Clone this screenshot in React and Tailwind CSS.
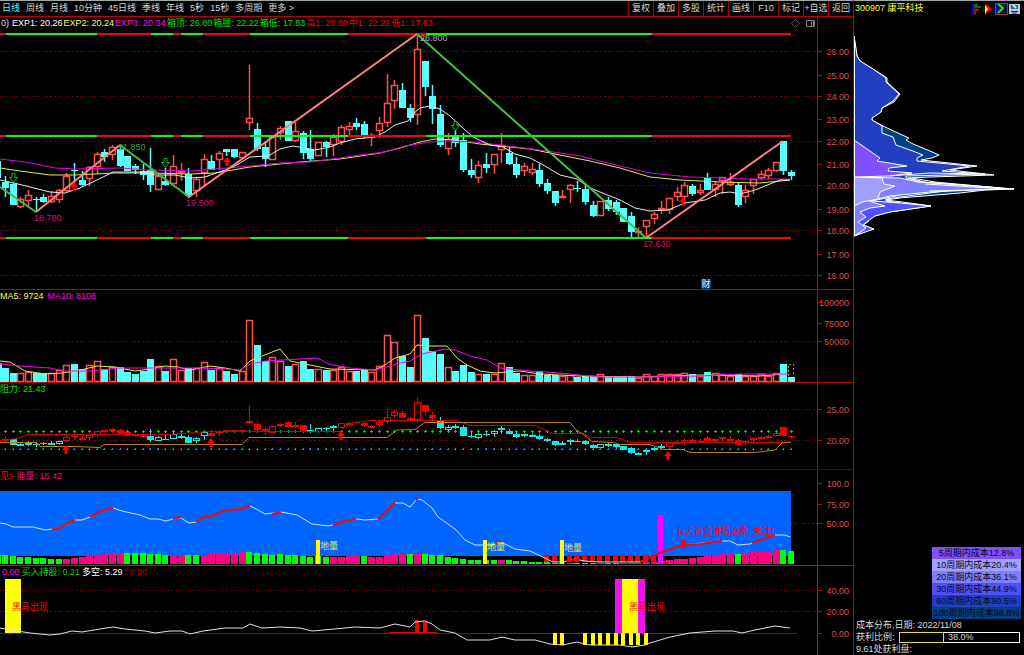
import { Diamond } from "lucide-react";

const periods = ["日线", "周线", "月线", "10分钟", "45日线", "季线", "年线", "5秒", "15秒", "多周期", "更多 >"];
const tools = ["复权", "叠加", "多股", "统计", "画线", "F10", "标记", "+自选", "返回"];

const UP = "#ff5050";
const DOWN = "#54ffff";
const PITCH = 7.63;
const barX = (i) => Math.round(5.2 + PITCH * i);

// kind, high, body top, body bottom, low, volume top
const candles = [
  ["d", 176, 182, 188, 197, 368], ["d", 183, 184, 205, 205, 373], ["u", 197, 199, 207, 208, 373], ["u", 190, 195, 201, 206, 372],
  ["d", 197, 199, 200, 211, 373], ["d", 194, 197, 202, 203, 373], ["u", 191, 196, 202, 203, 373], ["u", 189, 190, 200, 203, 370],
  ["u", 173, 176, 191, 192, 365], ["d", 163, 170, 171, 185, 364], ["d", 171, 180, 185, 187, 369], ["u", 166, 167, 179, 186, 365],
  ["u", 152, 154, 167, 174, 361], ["d", 149, 152, 157, 162, 369], ["u", 145, 147, 155, 160, 367], ["d", 146, 149, 166, 167, 367],
  ["d", 156, 156, 171, 171, 372], ["d", 164, 166, 170, 174, 374], ["d", 164, 171, 175, 180, 371], ["d", 148, 170, 185, 192, 359],
  ["u", 173, 176, 190, 190, 366], ["d", 168, 181, 185, 186, 371], ["u", 155, 166, 184, 184, 359], ["u", 163, 171, 173, 181, 370],
  ["d", 168, 174, 196, 198, 368], ["u", 177, 179, 191, 197, 368], ["u", 154, 159, 173, 185, 362], ["d", 155, 161, 170, 170, 370],
  ["u", 151, 153, 160, 170, 368], ["d", 149, 149, 152, 156, 371], ["d", 149, 149, 157, 158, 374], ["u", 152, 152, 158, 159, 371],
  ["u", 65, 118, 123, 130, 320], ["d", 123, 129, 149, 151, 345], ["d", 143, 147, 159, 167, 361], ["u", 137, 137, 160, 160, 357],
  ["u", 126, 128, 133, 140, 361], ["d", 121, 121, 141, 141, 366], ["u", 122, 131, 141, 142, 364], ["d", 131, 133, 153, 159, 361],
  ["d", 130, 149, 159, 161, 369], ["u", 142, 142, 156, 156, 369], ["d", 141, 142, 147, 157, 370], ["u", 134, 137, 145, 156, 370],
  ["u", 125, 127, 142, 145, 367], ["u", 122, 126, 130, 135, 371], ["d", 118, 123, 127, 130, 371], ["d", 121, 124, 137, 138, 369],
  ["u", 133, 135, 137, 146, 372], ["u", 117, 123, 131, 138, 366], ["u", 74, 103, 123, 127, 335], ["u", 80, 85, 101, 109, 342],
  ["d", 83, 90, 108, 108, 356], ["d", 104, 108, 118, 122, 367], ["u", 36, 49, 115, 125, 315], ["d", 61, 61, 87, 96, 338],
  ["d", 85, 96, 109, 124, 351], ["d", 105, 114, 145, 147, 354], ["u", 133, 139, 149, 155, 367], ["d", 130, 137, 143, 147, 371],
  ["d", 133, 140, 170, 172, 365], ["d", 159, 170, 175, 178, 372], ["u", 161, 165, 178, 183, 374], ["d", 153, 164, 168, 173, 374],
  ["u", 154, 154, 165, 174, 374], ["u", 133, 145, 150, 163, 363], ["d", 147, 153, 164, 165, 367], ["d", 157, 164, 175, 178, 373],
  ["u", 163, 166, 171, 176, 375], ["u", 163, 169, 173, 175, 375], ["d", 164, 170, 184, 187, 371], ["d", 179, 183, 191, 194, 375],
  ["d", 191, 191, 203, 206, 375], ["u", 190, 196, 197, 198, 376], ["u", 184, 185, 190, 203, 375], ["d", 181, 188, 189, 192, 377],
  ["d", 185, 189, 202, 205, 376], ["d", 201, 205, 216, 217, 376], ["u", 201, 201, 216, 216, 374], ["d", 197, 200, 209, 211, 376],
  ["d", 200, 202, 212, 215, 376], ["d", 208, 208, 222, 222, 376], ["d", 212, 216, 232, 237, 376], ["u", 227, 231, 233, 238, 378],
  ["u", 220, 220, 227, 238, 374], ["u", 212, 214, 219, 224, 376], ["u", 201, 208, 210, 214, 374], ["u", 198, 198, 210, 214, 374],
  ["u", 187, 192, 197, 201, 374], ["u", 182, 185, 197, 205, 373], ["d", 184, 186, 194, 196, 374], ["u", 184, 190, 193, 195, 376],
  ["d", 173, 178, 190, 190, 372], ["u", 181, 184, 190, 197, 373], ["u", 177, 177, 181, 194, 374], ["u", 173, 182, 185, 186, 376],
  ["d", 182, 185, 205, 207, 374], ["u", 185, 190, 197, 203, 376], ["u", 179, 179, 186, 194, 376], ["u", 171, 174, 178, 180, 374],
  ["u", 168, 170, 176, 179, 376], ["u", 162, 162, 171, 172, 373], ["d", 141, 141, 171, 175, 364], ["d", 170, 172, 176, 180, 377],
];

// top and bottom box lines change colour at these points
const boxSegments = [
  [0, 6, "#f00"], [6, 97, "#0f0"], [97, 151, "#f00"], [151, 173, "#0f0"], [173, 181, "#f00"], [181, 203, "#0f0"],
  [203, 250, "#f00"], [250, 348, "#0f0"], [348, 426, "#f00"], [426, 652, "#0f0"], [652, 791, "#f00"],
];

const exp1 = "0,180 14,183 30,187 50,192 65,193 80,188 95,181 113,172 140,172 155,175 175,175 190,178 205,177 225,170 235,166 250,157 268,156 280,149 293,146 305,148 315,150 330,147 340,143 355,139 375,137 385,132 395,125 408,121 413,114 420,108 430,106 440,109 450,116 465,130 475,138 490,145 503,147 515,154 530,158 545,166 560,175 577,179 590,188 605,194 620,200 635,208 650,211 668,210 685,203 705,200 720,193 730,192 740,194 755,190 780,180 790,180";
const exp2 = "0,168 20,171 50,175 75,175 115,173 150,173 190,174 215,173 250,167 280,164 300,162 340,159 380,153 400,148 420,142 435,139 455,140 480,144 500,146 530,149 560,155 590,161 620,168 650,177 680,180 720,182 760,183 790,180";
const exp3 = "0,159 25,162 55,168 75,169 120,168 150,170 190,171 240,167 280,163 310,162 340,158 360,155 385,152 405,146 430,142 450,141 475,142 500,145 540,150 580,156 620,166 650,173 690,177 720,178 750,179 790,179";
const volMa5 = "0,361 10,362 25,371 45,374 62,373 75,371 85,369 97,366 115,367 135,371 150,369 165,366 178,367 190,370 210,366 225,368 240,371 250,361 262,356 280,349 290,361 310,365 330,369 375,370 385,365 395,358 410,354 417,345 430,346 447,346 457,358 467,365 480,371 495,373 520,371 540,374 580,376 640,377 700,375 760,376 785,374";
const volMa10 = "0,364 20,366 50,368 65,371 90,371 120,368 200,368 225,369 240,370 250,364 265,361 300,359 318,358 328,364 350,368 375,370 390,366 400,363 410,361 422,354 445,349 455,350 470,356 487,360 500,368 530,371 560,373 600,377 640,377 700,376 740,374 790,374";
const energy = "0,523 6,524 13,527 33,527 45,530 52,529 60,528 75,520 82,520 90,517 97,513 113,508 122,511 140,515 150,519 158,519 166,521 173,519 181,518 189,523 196,522 204,517 212,516 223,511 241,509 250,506 258,510 265,514 281,512 297,515 312,524 328,526 333,525 345,521 356,519 365,520 378,519 395,503 403,503 410,507 417,499 422,500 432,508 438,517 455,529 465,540 475,545 490,545 500,543 505,544 515,549 530,551 543,557 553,562 563,562 575,559 585,561 600,562 640,562 648,558 660,553 682,545 722,541 730,541 738,545 750,544 775,535 785,535 790,537";
const energyHot = [
  "52,529 60,528 68,523 75,520", "90,517 97,513 105,510 113,508", "173,519 181,517", "196,522 204,517 212,516 223,511 241,509 250,506",
  "272,514 281,512", "333,525 345,521 356,519", "378,519 395,503", "415,499 418,499", "495,544 501,542", "566,561 579,559",
  "640,562 648,558 660,553 682,545 700,544 722,541", "752,543 775,535",
];
const bullBear = "0,628 5,629 30,633 50,635 60,634 72,631 82,632 100,629 113,627 125,629 145,631 155,633 170,631 182,631 190,634 203,631 225,628 243,628 250,624 262,628 280,627 300,628 312,631 345,628 355,627 380,628 395,624 410,627 415,622 425,621 432,624 440,630 455,633 467,640 490,640 502,637 515,640 535,640 550,644 563,645 577,642 590,645 620,645 632,647 645,645 650,643 670,637 690,633 715,631 733,631 742,633 755,630 775,626 790,628";

// energy bar tops, one per candle
const energyBars = [
  555, 556, 557, 557, 558, 558, 559, 559, 559, 558, 557, 556, 555, 554, 553, 553, 553, 553, 553, 554, 554, 555, 555, 555, 555, 555,
  555, 554, 554, 553, 553, 552, 552, 553, 554, 555, 554, 555, 555, 556, 557, 556, 557, 557, 557, 556, 556, 556, 557, 557, 555, 554,
  554, 554, 553, 554, 555, 555, 557, 558, 559, 560, 560, 560, 560, 560, 560, 561, 561, 562, 562, 562, 563, 563, 563, 563, 563, 563,
  563, 563, 563, 563, 563, 563, 562, 562, 561, 560, 559, 559, 558, 557, 556, 555, 554, 553, 554, 553, 552, 552, 551, 550, 550, 551,
];
const pinkRanges = [[8, 15], [22, 23], [26, 31], [43, 46], [48, 52], [54, 54], [65, 65], [74, 74], [78, 78], [81, 95], [97, 101]];
const isPink = (i) => pinkRanges.some(([a, b]) => i >= a && i <= b);

const coolRanges = [[1, 7], [19, 26], [40, 43], [57, 86]];
const isCool = (i) => coolRanges.some(([a, b]) => i >= a && i <= b);
const toResist = (y) => Math.round(440 + (y - 186) * 0.281);

const costs = [
  { label: "5周期内成本12.8%", color: "bg-[#8050ff]" },
  { label: "10周期内成本20.4%", color: "bg-[#a0a0ff]" },
  { label: "20周期内成本36.1%", color: "bg-[#8080ff]" },
  { label: "30周期内成本44.9%", color: "bg-[#5050ff]" },
  { label: "60周期内成本90.5%", color: "bg-[#2040c0]" },
  { label: "100周期内成本98.8%", color: "bg-[#004080]" },
];

function Grid({ ys, from = 0 }) {
  return ys.map((y) => (
    <line key={y} x1={from} x2="817" y1={y + 0.5} y2={y + 0.5} stroke="#b40000" strokeDasharray="1 2 1 2 1 4" />
  ));
}

function Line({ points, color, width = 1 }) {
  return <polyline points={points} fill="none" stroke={color} strokeWidth={width} />;
}

function DownArrow({ x, y }) {
  return <path d={`M${x - 1.5} ${y}h3v4h2.5l-4 5l-4 -5h2.5z`} fill="none" stroke="#00c000" />;
}

function UpArrow({ x, y, tail = 4 }) {
  return <path d={`M${x} ${y}l4 5h-2.5v${tail}h-3v-${tail}h-2.5z`} fill="#f00" />;
}

function Axis({ top, height, labels, frame }) {
  return (
    <aside className={`w-9 shrink-0 border-l ${frame}`}>
      <svg viewBox={`818 ${top} 35 ${height}`} className="h-full w-full">
        {labels.map(([y, text]) => (
          <g key={text}>
            <line x1="818" x2="822" y1={y + 0.5} y2={y + 0.5} stroke="#c00000" />
            <text x="849" y={y + 4} textAnchor="end" fontSize="9" fill="#e04848">{text}</text>
          </g>
        ))}
      </svg>
    </aside>
  );
}

function Panel({ legend, top, height, labels, border = "border-[#c00000]", frame = "border-[#c00000]", children }) {
  return (
    <section className={`flex border-t ${border}`}>
      <div className="min-w-0 flex-1 overflow-hidden">
        <div className="flex h-3 items-center whitespace-nowrap leading-3">{legend}</div>
        <svg viewBox={`0 ${top + 12} 817 ${height - 12}`} className="block h-auto w-full">{children}</svg>
      </div>
      <Axis top={top} height={height} labels={labels} frame={frame} />
    </section>
  );
}

function Candle({ x, c, color, hollow, stroke = 1, map = (y) => y }) {
  const [, high, top, bottom, low] = c;
  const t = map(top);
  const h = Math.max(map(bottom) - t, 1);
  return (
    <g strokeWidth={stroke}>
      <line x1={x + 0.5} x2={x + 0.5} y1={map(high)} y2={t} stroke={color} />
      <line x1={x + 0.5} x2={x + 0.5} y1={t + h} y2={map(low)} stroke={color} />
      {hollow ? (
        <rect x={x - 2.5} y={t + 0.5} width="6" height={Math.max(h - 1, 1)} fill="#000" stroke={color} />
      ) : (
        <rect x={x - 3} y={t} width="7" height={h} fill={color} />
      )}
    </g>
  );
}

function PriceChart() {
  return (
    <>
      <Grid ys={[51, 96, 141, 185, 230, 275]} />
      <rect x="-5" y="161" width="6" height="17" fill={DOWN} />
      {candles.map((c, i) => (
        <Candle key={i} x={barX(i)} c={c} color={c[0] === "u" ? UP : DOWN} hollow={c[0] === "u"} stroke={1.5} />
      ))}
      <Line points={exp2} color="#e8e84c" />
      <Line points={exp3} color="#e000e0" />
      <Line points={exp1} color="#e8e8e8" />
      {boxSegments.map(([a, b, color]) =>
        [34, 136, 238].map((y) => <rect key={`${a}-${y}`} x={a} y={y - 1} width={b - a} height="2" fill={color} />)
      )}
      <Line points="0,187 36,212" color="#40c040" width={2} />
      <Line points="36,212 120,145" color="#ff8080" width={2} />
      <Line points="120,145 189,197" color="#40c040" width={2} />
      <Line points="189,197 417,34" color="#ff8080" width={2} />
      <Line points="417,34 646,238" color="#40c040" width={2} />
      <Line points="646,238 783,141" color="#ff8080" width={2} />
      <DownArrow x={13.5} y={173.5} />
      <DownArrow x={165.5} y={158.5} />
      <DownArrow x={455.5} y={121.5} />
      <UpArrow x={74} y={182} />
      <UpArrow x={227} y={157} />
      <UpArrow x={683} y={197} />
      <g fontSize="9">
        <text x="118" y="150" fill="#30a030">21.850</text>
        <text x="420" y="41" fill="#b0b0b0">26.800</text>
        <text x="34" y="221" fill="#e00080">18.780</text>
        <text x="186" y="206" fill="#e00080">19.500</text>
        <text x="643" y="247" fill="#e00080">17.630</text>
      </g>
      <rect x="701" y="279" width="10" height="10" fill="#003a70" />
      <text x="706" y="287" fontSize="9" textAnchor="middle" fill="#fff">财</text>
    </>
  );
}

function VolumeChart() {
  return (
    <>
      <Grid ys={[341]} />
      <rect x="-5" y="363" width="7" height="19" fill={DOWN} />
      {candles.map((c, i) => {
        const x = barX(i);
        return c[0] === "u" ? (
          <rect key={i} x={x - 2.5} y={c[5] + 0.5} width="6" height={381 - c[5]} fill="#000" stroke={UP} strokeWidth="1.5" />
        ) : (
          <rect key={i} x={x - 3} y={c[5]} width="7" height={382 - c[5]} fill={DOWN} />
        );
      })}
      <path d="M788.5 376V364.5h5V376" fill="none" stroke="#a0a000" strokeDasharray="2 2" />
      <Line points={volMa5} color="#e8e850" />
      <Line points={volMa10} color="#f0f" />
    </>
  );
}

function ResistChart() {
  return (
    <>
      <Grid ys={[409, 440]} />
      {candles.map((c, i) => (
        <g key={i}>
          <path d={`M${barX(i) - 1} 431.5h3M${barX(i) + 0.5} 430v3`} stroke="#00d800" />
          <path d={`M${barX(i) - 1} 449.5h2M${barX(i) + 0.5} 448v2`} stroke="#00a0d8" />
          <Candle x={barX(i)} c={c} color={isCool(i) ? "#00f0f0" : "#f00000"} hollow={c[0] === "u"} map={toResist} />
        </g>
      ))}
      <Line
        points="0,440.5 18,438.5 28,434.5 170,434.5 208,431.5 340,431.5 345,427 352,423 370,420.5 457,420.5 470,425.5 535,425.5 553,433.5 583,433.5 590,437.5 617,437.5 630,442.5 791,442.5"
        color="#d00000"
      />
      <Line
        points="0,442.5 37,442.5 40,446.5 75,446.5 100,447.5 104,444.5 242,444.5 249,437.5 387,437.5 397,430 415,429.5 425,422.5 570,422.5 577,431 583,434 592,441.5 613,442.5 620,444.5 650,444.5 664,449.5 683,449.5 690,452.5 755,452.5 775,450 782,443 791,442"
        color="#b88600"
      />
      <UpArrow x={66} y={445} />
      <UpArrow x={211} y={438} />
      <UpArrow x={341} y={431} />
      <UpArrow x={668} y={451} />
    </>
  );
}

function EnergyChart() {
  return (
    <>
      <Grid ys={[523]} from={791} />
      <rect x="0" y="491" width="791" height="65" fill="#0064ff" />
      <g shapeRendering="crispEdges">
        <rect x="0" y="555" width="1" height="9" fill="#00ff00" />
        {energyBars.map((y, i) => (
          <rect key={i} x={barX(i) - 3} y={y} width={isPink(i) ? 7 : 6} height={564 - y} fill={isPink(i) ? "#ff0080" : "#00ff00"} />
        ))}
        {energyBars.slice(71, 86).map((_, i) => (
          <rect key={i} x={barX(i + 71) - 3} y="555" width="5" height="7" fill="#f00" />
        ))}
        {[316, 483, 560].map((x) => <rect key={x} x={x} y="540" width="4" height="24" fill="#ff0" />)}
        <rect x="658" y="515" width="5" height="48" fill="#f0f" />
        <rect x="681" y="540" width="5" height="8" fill="#f00" />
      </g>
      <Line points={energy} color="#d0e4ff" />
      {energyHot.map((p) => <Line key={p} points={p} color="#f00" width={2} />)}
      <g fontSize="9" fill="#e0f040">
        <text x="320" y="549">地量</text>
        <text x="487" y="550">地量</text>
        <text x="564" y="551">地量</text>
      </g>
      <text x="676" y="534" fontSize="9" fill="#f00">有大资金进场迹象, 关注!</text>
    </>
  );
}

function BullBearChart() {
  return (
    <>
      <Grid ys={[590, 611]} />
      <rect x="0" y="633" width="797" height="1" fill="#a00000" />
      <rect x="473" y="633" width="247" height="1" fill="#b00060" />
      <rect x="5" y="579" width="16" height="54" fill="#ff0" />
      <rect x="615" y="579" width="30" height="54" fill="#f010f0" />
      <rect x="622" y="579" width="16" height="54" fill="#ff0" />
      <path d="M415 620h4v13h-4zM423 622h4v11h-4z" fill="#f00" />
      <rect x="389" y="632" width="48" height="1" fill="#e00000" />
      <Line points={bullBear} color="#e0e0e0" />
      {[72, 73, 76, 77, 78, 79, 80, 81, 82, 83, 84].map((i) => (
        <rect key={i} x={barX(i) - 2} y="633" width="4" height="12" fill="#ff0" />
      ))}
      <text x="12" y="610" fontSize="9" fill="#f00">黑马出现</text>
      <text x="629" y="610" fontSize="9" fill="#f00">黑马出现</text>
    </>
  );
}

function ChipDistribution() {
  return (
    <svg viewBox="854 17 170 222" className="block h-auto w-full" stroke="#fff" strokeWidth="1" strokeLinejoin="round">
      <path
        fill="#004080"
        d="M854 36L857 56L860 61L873 69L887 78L887 82L900 94L894 102L882 108L881 112L872 118V120L883 126L900 134L909 138L906 140L913 144L930 151L939 155L932 158L921 160L977 166L950 170L994 175L930 177L908 178L925 182L990 187L1014 189L985 190L960 193L900 198L886 200L910 203L931 206L890 212L870 217L868 222L863 225L874 229L865 232L854 236z"
      />
      <path
        fill="#2040c0"
        d="M854 36L857 56L860 61L873 69L886 78L886 82L899 94L893 101L882 108L881 112L872 118V120L882 126V133L893 137L896 145L910 150L923 155L917 158V161L970 166L942 171L985 174L906 176V178L922 182L970 188L930 193L886 199V201L900 203L854 206z"
      />
      <path fill="#5050ff" d="M854 178L905 180L940 186L905 194L872 201L900 203L931 206L890 212L875 216L868 221L863 225L874 229L865 232L854 236z" />
      <path fill="#8080ff" d="M854 177L900 178L918 182L960 185L1014 189L975 190L930 192L890 196L869 201L885 206L870 208L860 212L866 217L858 222L866 228L862 231L854 236z" />
      <path fill="#a0a0ff" d="M854 177L882 178L884 184L895 186L880 192L878 199L862 202L854 206z" />
      <path fill="#8050ff" d="M854 140L880 158L877 161L907 166L889 168L888 171L912 173L890 176L854 177z" />
      <path fill="none" d="M854.500 36V236M890 176L930 173L985 174M912 178L935 182L1000 188M925 184L1006 189L930 191" />
    </svg>
  );
}

function HeaderIcons() {
  return (
    <div className="flex items-center gap-px">
      <button aria-label="成本分布" className="flex">
        <svg width="11" height="12" viewBox="0 0 11 12" fill="none">
          <path d="M1 1v10" stroke="#00f" strokeWidth="2" />
          <path d="M2 2h4M2 4h7" stroke="#009000" strokeWidth="1.5" />
          <path d="M2 6.500h5M2 8.500h3M2 10.500h2" stroke="#f00" strokeWidth="1.5" />
        </svg>
      </button>
      <button aria-label="火焰山" className="flex">
        <svg width="10" height="12" viewBox="0 0 10 12">
          <path d="M1 1l3 1l4 4l-4 3l-3 2z" fill="#f00" />
          <path d="M1 2l3 4l-3 5z" fill="#ff0" />
        </svg>
      </button>
      <button aria-label="活跃度" className="flex border border-[#b03030] bg-[#101040]">
        <svg width="11" height="10" viewBox="0 0 11 10" fill="none">
          <path d="M1 0v10" stroke="#00f" strokeWidth="2" />
          <path d="M2 0l5 4l-5 5" stroke="#0f0" strokeWidth="2" />
        </svg>
      </button>
      <button aria-label="设置" className="flex">
        <svg width="11" height="12" viewBox="0 0 11 12">
          <rect x="0" y="1" width="11" height="10" fill="#c0c8e0" />
          <rect x="2" y="2" width="7" height="4" fill="#1070d0" />
          <path d="M4 2l3 3" stroke="#ff0" strokeWidth="2" />
          <path d="M2 8.500h7M3 10h5" stroke="#203060" />
        </svg>
      </button>
    </div>
  );
}

export default function App() {
  return (
    <main className="flex min-h-screen overflow-hidden bg-black font-['Liberation_Sans','Noto_Sans_CJK_SC',sans-serif] text-[9px] text-[#d8d8d8]">
      <div className="min-w-0 flex-1">
        <nav className="flex h-4 items-stretch justify-between border-t border-[#a0a8a8] leading-none whitespace-nowrap">
          <div className="flex items-center gap-1.5 pl-0.5">
            {periods.map((p, i) => (
              <button key={p} className={i === 0 ? "text-[#54ffff]" : ""}>{p}</button>
            ))}
          </div>
          <div className="flex">
            {tools.map((t) => (
              <button key={t} className="w-[25px] border-l border-[#a00000]">{t}</button>
            ))}
          </div>
        </nav>

        <Panel
          top={17}
          height={272}
          labels={[
            [51, "26.00"], [75, "25.00"], [96, "24.00"], [119, "23.00"], [141, "22.00"], [164, "21.00"],
            [185, "20.00"], [209, "19.00"], [230, "18.00"], [254, "17.00"], [275, "16.00"],
          ]}
          legend={
            <>
              <div className="flex flex-1 gap-px pl-px">
                <span className="w-2.5">0)</span>
                <span className="text-white">EXP1: 20.26</span>
                <span className="text-[#ffff54]">EXP2: 20.24</span>
                <span className="text-[#f0f]">EXP3: 20.34</span>
                <span className="text-[#00e000]">箱顶: 26.80</span>
                <span className="text-[#00e000]">箱腰: 22.22</span>
                <span className="text-[#00e000]">箱低: 17.63</span>
                <span className="text-[#f00000]">高1: 26.80</span>
                <span className="text-[#f00000]">中1: 22.22</span>
                <span className="text-[#f00000]">低1: 17.63</span>
              </div>
              <div className="flex items-center gap-1.5 pr-0.5 text-[#808080]">
                <Diamond size={9} />
                <svg width="9" height="9" viewBox="0 0 9 9" fill="none" stroke="currentColor">
                  <path d="M.5 1.500h8v6h-8zM5.500 2v5M7.500 2v5" />
                </svg>
              </div>
            </>
          }
        >
          <PriceChart />
        </Panel>

        <Panel
          top={290}
          height={92}
          labels={[[302, "100000"], [323, "75000"], [341, "50000"]]}
          legend={
            <div className="flex gap-1">
              <span className="text-[#ffff54]">MA5: 9724</span>
              <span className="text-[#f0f]">MA10: 8108</span>
            </div>
          }
        >
          <VolumeChart />
        </Panel>

        <Panel
          top={383}
          height={86}
          labels={[[409, "25.00"], [440, "20.00"]]}
          legend={<div className="text-[#00e000]">阻力: 21.43</div>}
        >
          <ResistChart />
        </Panel>

        <Panel
          top={470}
          height={95}
          border="border-[#700000]"
          labels={[[483, "100.0"], [504, "75.00"], [523, "50.00"]]}
          legend={
            <div className="flex gap-0.5">
              <span className="text-[#f00]">见:-</span>
              <span className="text-[#f00080]">能量: 15.42</span>
            </div>
          }
        >
          <EnergyChart />
        </Panel>

        <Panel
          top={566}
          height={89}
          border="border-[#e00000]"
          frame="border-[#f00000]"
          labels={[[590, "40.00"], [611, "20.00"], [633, "0.00"]]}
          legend={
            <div className="flex gap-0.5 pl-0.5">
              <span className="text-[#f0f]">0.00</span>
              <span className="text-[#00d000]">买入持股: 0.21</span>
              <span className="text-white">多空: 5.29</span>
              <span className="text-[#b00000]">: 0.00</span>
            </div>
          }
        >
          <BullBearChart />
        </Panel>
      </div>

      <aside className="flex w-[171px] shrink-0 flex-col border-l border-[#c00000]">
        <header className="flex h-[17px] items-center justify-between border-t border-[#a0a8a8] pr-1 pl-px whitespace-nowrap">
          <h1 className="text-[#ffff20]">300907 康平科技</h1>
          <HeaderIcons />
        </header>
        <ChipDistribution />
        <ul className="mt-auto mr-[3px] w-[89px] self-end text-center leading-3 whitespace-nowrap text-[#080820]">
          {costs.map((c) => (
            <li key={c.label} className={`h-3 ${c.color}`}>{c.label}</li>
          ))}
        </ul>
        <div className="pr-1 pl-0.5 leading-3">
          <p>成本分布,日期: 2022/11/08</p>
          <div className="flex h-3 items-center gap-1">
            <span>获利比例:</span>
            <div className="flex h-[11px] flex-1 items-center border border-white">
              <div className="-my-px -ml-px h-[11px] w-[38%] border border-[#e0e040]" />
              <span className="pl-1">38.0%</span>
            </div>
          </div>
          <p>9.61处获利盘:</p>
        </div>
      </aside>
    </main>
  );
}
